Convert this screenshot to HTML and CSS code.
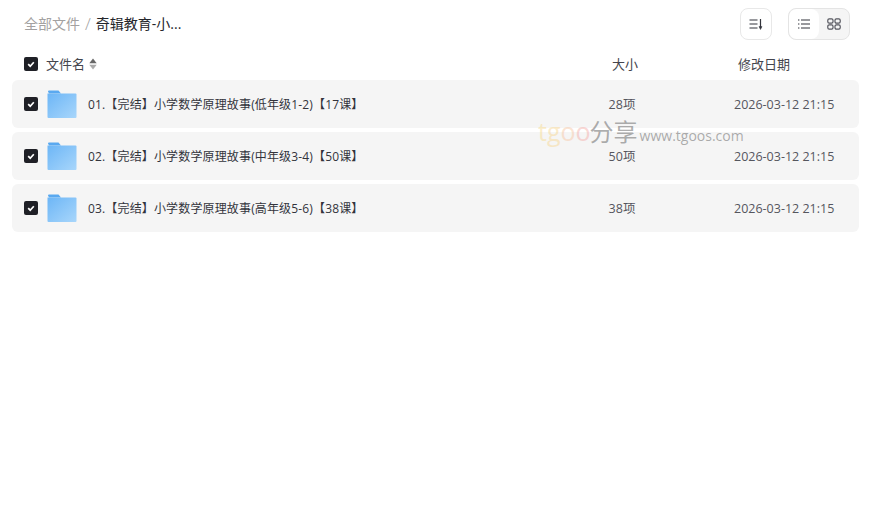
FILE: index.html
```html
<!DOCTYPE html>
<html lang="zh-CN">
<head>
    <meta charset="UTF-8">
    <title>全部文件</title>
    <link rel="stylesheet" href="styles.css">
</head>
<body>
    <div class="page">
        <div class="topbar">
            <div class="crumbs">
                <span class="crumb-root">全部文件</span>
                <span class="crumb-sep">/</span>
                <span class="crumb-current">奇辑教育-小...</span>
            </div>
            <div class="tools">
                <div class="tool-btn">
                    <svg width="14" height="14" viewBox="0 0 14 14" fill="none" stroke="#33343c" stroke-width="1.2">
                        <path d="M0.500 3h8M0.500 7h8M0.500 11h8M11.500 2v9"/>
                        <path d="M10 9.600h3L11.500 12.500z" fill="#33343c" stroke-width="0.5"/>
                    </svg>
                </div>
                <div class="view-switch">
                    <div class="view-opt active">
                        <svg width="14" height="14" viewBox="0 0 14 14" fill="none" stroke="#33343c" stroke-width="1.2">
                            <path d="M4 3h9M4 7h9M4 11h9"/>
                            <path d="M1 3h1.400M1 7h1.400M1 11h1.400"/>
                        </svg>
                    </div>
                    <div class="view-opt">
                        <svg width="14" height="14" viewBox="0 0 14 14" fill="none" stroke="#55565e" stroke-width="1.2">
                            <rect x="0.800" y="1.800" width="5.200" height="4.400" rx="1.400"/>
                            <rect x="8" y="1.800" width="5.200" height="4.400" rx="1.400"/>
                            <rect x="0.800" y="7.800" width="5.200" height="4.400" rx="1.400"/>
                            <rect x="8" y="7.800" width="5.200" height="4.400" rx="1.400"/>
                        </svg>
                    </div>
                </div>
            </div>
        </div>

        <div class="list-head">
            <span class="check"><svg width="10" height="10" viewBox="0 0 10 10"><path d="M2.200 5.200l2 2 3.600-4" fill="none" stroke="#fff" stroke-width="1.700"/></svg></span>
            <span class="head-name">文件名</span>
            <svg class="sort-arrows" width="8" height="12" viewBox="0 0 8 12">
                <path d="M4 .5l3.700 4.800H.3z" fill="#666"/>
                <path d="M4 11.500L.3 6.700h7.400z" fill="#aaa"/>
            </svg>
            <span class="col-size">大小</span>
            <span class="col-date">修改日期</span>
        </div>

        <div class="rows">
            <div class="row">
                <span class="check"><svg width="10" height="10" viewBox="0 0 10 10"><path d="M2.200 5.200l2 2 3.600-4" fill="none" stroke="#fff" stroke-width="1.700"/></svg></span>
                <svg class="folder" width="30" height="28" viewBox="0 0 30 28">
                    <defs>
                        <linearGradient id="fold" x1="0" y1="0" x2="1" y2="1">
                            <stop offset="0" stop-color="#6db6f6"/>
                            <stop offset="1" stop-color="#a8d6fb"/>
                        </linearGradient>
                    </defs>
                    <path d="M1 1.500A1 1 0 0 1 2 .5h9.500l2.500 3H2z" fill="#5aa9f0"/>
                    <path d="M.5 3.500h28a1 1 0 0 1 1 1V27a1 1 0 0 1-1 1H1.500a1 1 0 0 1-1-1z" fill="url(#fold)"/>
                </svg>
                <span class="name">01.【完结】小学数学原理故事(低年级1-2)【17课】</span>
                <span class="size">28项</span>
                <span class="date">2026-03-12 21:15</span>
            </div>
            <div class="row">
                <span class="check"><svg width="10" height="10" viewBox="0 0 10 10"><path d="M2.200 5.200l2 2 3.600-4" fill="none" stroke="#fff" stroke-width="1.700"/></svg></span>
                <svg class="folder" width="30" height="28" viewBox="0 0 30 28">
                    <path d="M1 1.500A1 1 0 0 1 2 .5h9.500l2.500 3H2z" fill="#5aa9f0"/>
                    <path d="M.5 3.500h28a1 1 0 0 1 1 1V27a1 1 0 0 1-1 1H1.500a1 1 0 0 1-1-1z" fill="url(#fold)"/>
                </svg>
                <span class="name">02.【完结】小学数学原理故事(中年级3-4)【50课】</span>
                <span class="size">50项</span>
                <span class="date">2026-03-12 21:15</span>
            </div>
            <div class="row">
                <span class="check"><svg width="10" height="10" viewBox="0 0 10 10"><path d="M2.200 5.200l2 2 3.600-4" fill="none" stroke="#fff" stroke-width="1.700"/></svg></span>
                <svg class="folder" width="30" height="28" viewBox="0 0 30 28">
                    <path d="M1 1.500A1 1 0 0 1 2 .5h9.500l2.500 3H2z" fill="#5aa9f0"/>
                    <path d="M.5 3.500h28a1 1 0 0 1 1 1V27a1 1 0 0 1-1 1H1.500a1 1 0 0 1-1-1z" fill="url(#fold)"/>
                </svg>
                <span class="name">03.【完结】小学数学原理故事(高年级5-6)【38课】</span>
                <span class="size">38项</span>
                <span class="date">2026-03-12 21:15</span>
            </div>
        </div>

        <div class="watermark">
            <span class="wm-logo"><span class="wm-t">t</span><span class="wm-g">g</span><span class="wm-o1">o</span><span class="wm-o2">o</span></span><span class="wm-cn">分享</span>
            <span class="wm-url">www.tgoos.com</span>
        </div>
    </div>
</body>
</html>
```

FILE: styles.css
```css
html, body {
    height: 100%;
    margin: 0;
    background: #fff;
    font-family: 'Open Sans', 'Noto Sans CJK SC', sans-serif;
    color: #33343c;
    overflow: hidden;
}

.page {
    position: relative;
    height: 100%;
    padding: 8px 15px 0 12px;
    box-sizing: border-box;
}

.topbar {
    display: flex;
    align-items: center;
    justify-content: space-between;
    height: 32px;
    padding: 0 9px 0 12px;
}

.crumbs {
    display: flex;
    align-items: center;
    height: 30px;
    font-size: 14px;
    line-height: 18px;
}

.crumb-root {
    color: #a3a1a1;
}

.crumb-sep {
    margin: 0 5px;
    font-size: 17px;
    font-weight: 300;
    color: #a3a1a1;
}

.crumb-current {
    color: #25262b;
}

.tools {
    display: flex;
    gap: 16px;
}

.tool-btn {
    display: flex;
    align-items: center;
    justify-content: center;
    width: 30px;
    height: 30px;
    border: 1px solid #e8e8e8;
    border-radius: 8px;
}

.view-switch {
    display: flex;
    width: 60px;
    height: 30px;
    border: 1px solid #e4e4e4;
    border-radius: 8px;
    background: #f5f5f5;
    overflow: hidden;
}

.view-opt {
    display: flex;
    flex: 1;
    align-items: center;
    justify-content: center;
}

.view-opt.active {
    background: #fff;
    border-radius: 8px;
}

.list-head {
    display: flex;
    align-items: center;
    height: 32px;
    padding: 8px 0 0 12px;
    font-size: 13px;
    color: #44454d;
}

.list-head span:not(.check) {
    padding-bottom: 2px;
}

.check {
    display: flex;
    flex: none;
    align-items: center;
    justify-content: center;
    width: 14px;
    height: 14px;
    border-radius: 2px;
    background: #1f2026;
}

.head-name {
    margin-left: 8px;
}

.sort-arrows {
    margin-left: 4px;
}

.col-size {
    margin-left: 515px;
}

.col-date {
    margin-left: 100px;
}

.rows {
    display: flex;
    flex-direction: column;
    gap: 4px;
}

.row {
    display: flex;
    align-items: center;
    height: 48px;
    padding-left: 12px;
    border-radius: 6px;
    background: #f5f5f5;
    font-size: 12px;
    line-height: 16px;
}

.folder {
    flex: none;
    margin-left: 9px;
}

.name {
    width: 497px;
    margin-left: 11px;
    padding-top: 2px;
    color: #33343c;
    letter-spacing: 0.15px;
    white-space: nowrap;
}

.size {
    width: 100px;
    margin-left: -13px;
    padding-top: 2px;
    color: #55565e;
    font-size: 12.5px;
    text-align: center;
}

.date {
    margin-left: 62px;
    padding-top: 2px;
    color: #55565e;
    font-size: 12.5px;
    white-space: nowrap;
}

.watermark {
    position: absolute;
    top: 116px;
    left: 538px;
    display: flex;
    align-items: baseline;
    white-space: nowrap;
    pointer-events: none;
}

.wm-logo {
    font-size: 25px;
    font-weight: 500;
    line-height: 30px;
    opacity: 0.45;
}

.wm-t { color: #f7d98a; }
.wm-g { color: #f8d48c; }
.wm-o1 { color: #f8c4a0; }
.wm-o2 { color: #f4a9a4; }

.wm-cn {
    font-size: 24px;
    line-height: 30px;
    margin-left: -1px;
    color: rgba(120, 120, 120, 0.6);
}

.wm-url {
    margin-left: 2px;
    font-size: 14px;
    color: rgba(120, 120, 120, 0.6);
}
```
